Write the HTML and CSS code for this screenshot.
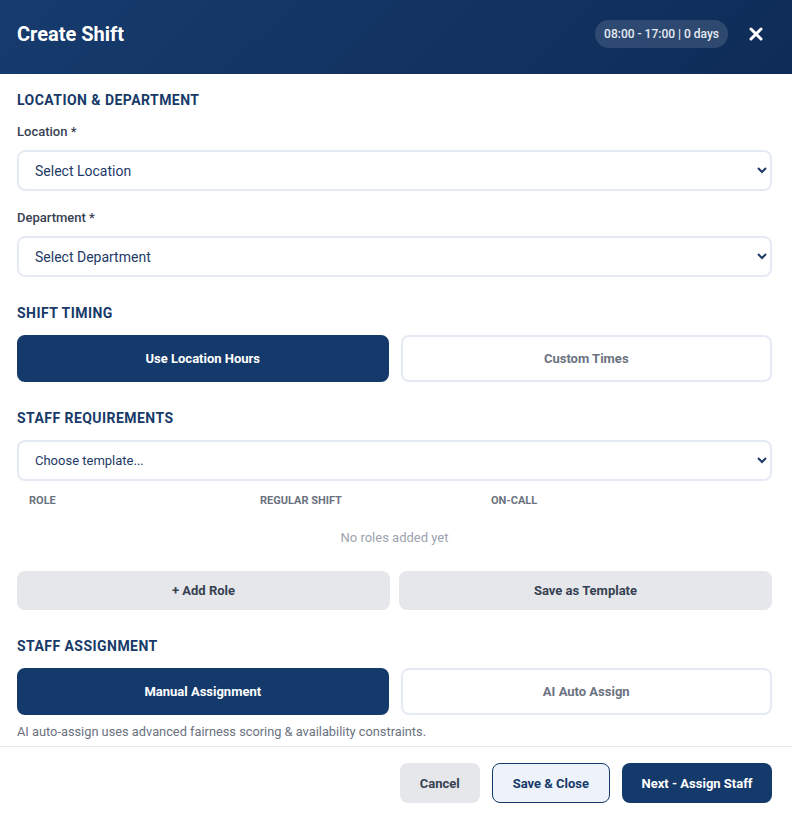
FILE: index.html
```html
<!DOCTYPE html>
<html lang="en">
<head>
    <meta charset="UTF-8">
    <meta name="viewport" content="width=device-width, initial-scale=1.0">
    <title>Create Shift</title>
    <link rel="stylesheet" href="styles.css">
</head>
<body>
    <div class="modal">
        <div class="modal-header">
            <h1 class="modal-title">Create Shift</h1>
            <div class="header-right">
                <span class="time-pill">08:00 - 17:00 | 0 days</span>
                <button class="close-btn" aria-label="Close">
                    <svg width="14" height="14" viewBox="0 0 14 14">
                        <path d="M2 2 L12 12 M12 2 L2 12" stroke="#fff" stroke-width="3" stroke-linecap="round"/>
                    </svg>
                </button>
            </div>
        </div>

        <div class="modal-body">
            <section class="section">
                <h2 class="section-title">Location &amp; Department</h2>
                <div class="field">
                    <label class="field-label">Location *</label>
                    <select class="select">
                        <option>Select Location</option>
                    </select>
                </div>
                <div class="field">
                    <label class="field-label">Department *</label>
                    <select class="select">
                        <option>Select Department</option>
                    </select>
                </div>
            </section>

            <section class="section">
                <h2 class="section-title">Shift Timing</h2>
                <div class="toggle">
                    <button class="toggle-btn active">Use Location Hours</button>
                    <button class="toggle-btn">Custom Times</button>
                </div>
            </section>

            <section class="section">
                <h2 class="section-title">Staff Requirements</h2>
                <select class="select select-small">
                    <option>Choose template...</option>
                </select>
                <div class="roles-head">
                    <span>Role</span>
                    <span>Regular Shift</span>
                    <span>On-Call</span>
                </div>
                <div class="roles-empty">No roles added yet</div>
                <div class="role-actions">
                    <button class="grey-btn">+ Add Role</button>
                    <button class="grey-btn">Save as Template</button>
                </div>
            </section>

            <section class="section">
                <h2 class="section-title">Staff Assignment</h2>
                <div class="toggle">
                    <button class="toggle-btn active">Manual Assignment</button>
                    <button class="toggle-btn">AI Auto Assign</button>
                </div>
                <p class="note">AI auto-assign uses advanced fairness scoring &amp; availability constraints.</p>
            </section>
        </div>

        <div class="modal-footer">
            <button class="btn btn-cancel">Cancel</button>
            <button class="btn btn-outline">Save &amp; Close</button>
            <button class="btn btn-primary">Next - Assign Staff</button>
        </div>
    </div>
</body>
</html>
```

FILE: styles.css
```css
* {
    box-sizing: border-box;
}

body {
    margin: 0;
    font-family: Roboto, "Liberation Sans", Arial, sans-serif;
    background: #fff;
}

.modal {
    display: flex;
    flex-direction: column;
    height: 100vh;
    overflow: hidden;
}

.modal-header {
    height: 74px;
    flex-shrink: 0;
    display: flex;
    align-items: center;
    justify-content: space-between;
    padding: 0 22px 6px 17px;
    background: linear-gradient(135deg, #163b6d, #0f2c58);
}

.modal-title {
    margin: 0;
    color: #fff;
    font-size: 20px;
    font-weight: 700;
}

.header-right {
    display: flex;
    align-items: center;
    gap: 14px;
}

.time-pill {
    height: 28px;
    line-height: 28px;
    padding: 0 9px;
    border-radius: 14px;
    background: rgba(255, 255, 255, 0.13);
    color: #e6ebf3;
    font-size: 12px;
    font-weight: 500;
}

.close-btn {
    width: 28px;
    height: 28px;
    padding: 0;
    border: none;
    background: none;
    display: flex;
    align-items: center;
    justify-content: center;
    cursor: pointer;
}

.modal-body {
    flex: 1;
    padding: 16px 20px 0 17px;
}

.section {
    margin-bottom: 26px;
}

.section:last-child {
    margin-bottom: 0;
}

.section-title {
    margin: 0 0 12px;
    line-height: 20px;
    font-size: 14px;
    font-weight: 700;
    text-transform: uppercase;
    letter-spacing: 0.45px;
    color: #173a68;
}

.field {
    margin-top: 14px;
}

.field + .field {
    margin-top: 19px;
}

.field-label {
    display: block;
    line-height: 16px;
    margin-bottom: 10px;
    font-size: 13px;
    font-weight: 500;
    color: #374151;
}

.select {
    display: block;
    width: 100%;
    height: 41px;
    padding: 0 12px;
    border: 2px solid #e5eaf4;
    border-radius: 8px;
    background: #fff;
    color: #1e3a66;
    font-family: inherit;
    font-size: 14px;
}

.select-small {
    font-size: 13px;
}

.toggle {
    display: grid;
    grid-template-columns: 1fr 1fr;
    gap: 12px;
}

.toggle-btn {
    height: 47px;
    border: 2px solid #e5eaf4;
    border-radius: 8px;
    background: #fff;
    color: #6b7280;
    font-family: inherit;
    font-size: 13px;
    font-weight: 700;
    cursor: pointer;
}

.toggle-btn.active {
    background: #143a6b;
    border-color: #143a6b;
    color: #fff;
}

.roles-head {
    display: grid;
    grid-template-columns: 231px 231px 1fr;
    padding: 13px 12px 0;
    line-height: 14px;
    font-size: 11px;
    font-weight: 700;
    text-transform: uppercase;
    color: #6b7280;
}

.roles-empty {
    padding: 22px 0 0;
    line-height: 16px;
    text-align: center;
    font-size: 13px;
    color: #9ca3af;
}

.role-actions {
    display: grid;
    grid-template-columns: 1fr 1fr;
    gap: 9px;
    margin-top: 25px;
}

.grey-btn {
    height: 39px;
    border: none;
    border-radius: 8px;
    background: #e5e7eb;
    color: #374151;
    font-family: inherit;
    font-size: 13px;
    font-weight: 700;
    cursor: pointer;
}

.note {
    margin: 9px 0 0;
    line-height: 16px;
    font-size: 12.8px;
    color: #6b7280;
}

.modal-footer {
    flex-shrink: 0;
    display: flex;
    justify-content: flex-end;
    gap: 12px;
    padding: 16px 20px 13px;
    border-top: 1px solid #e5e7eb;
}

.btn {
    height: 40px;
    padding: 0 20px;
    border-radius: 8px;
    font-family: inherit;
    font-size: 13px;
    font-weight: 700;
    cursor: pointer;
}

.btn-cancel {
    border: none;
    background: #e5e7eb;
    color: #374151;
}

.btn-outline {
    border: 1px solid #143a6b;
    background: #eef2fa;
    color: #173a68;
}

.btn-primary {
    padding: 0 19.5px;
    border: none;
    background: #143a6b;
    color: #fff;
}
```
